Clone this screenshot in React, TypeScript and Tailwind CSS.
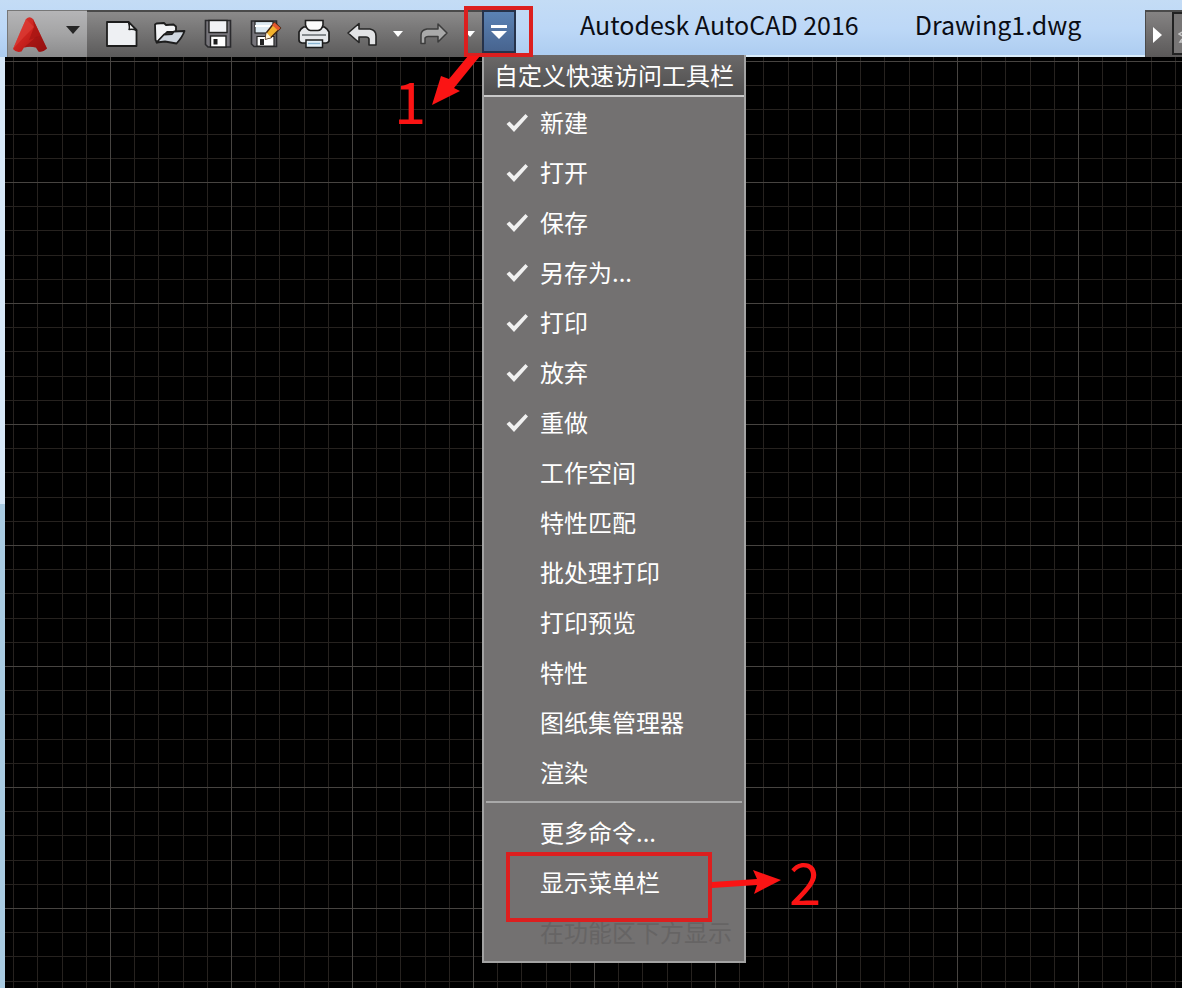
import { useState } from "react";
import type { ReactNode } from "react";

type MenuEntry = {
  label: string;
  checked?: boolean;
};

const toggles: MenuEntry[] = [
  { label: "新建", checked: true },
  { label: "打开", checked: true },
  { label: "保存", checked: true },
  { label: "另存为...", checked: true },
  { label: "打印", checked: true },
  { label: "放弃", checked: true },
  { label: "重做", checked: true },
  { label: "工作空间" },
  { label: "特性匹配" },
  { label: "批处理打印" },
  { label: "打印预览" },
  { label: "特性" },
  { label: "图纸集管理器" },
  { label: "渲染" },
];

// --- ICONS ---

function LogoIcon() {
  return (
    <svg width="36" height="38" viewBox="0 0 36 38">
      <defs>
        <linearGradient id="logoRed" x1="0" y1="0" x2="1" y2="1">
          <stop offset="0" stopColor="#dc3a33" />
          <stop offset="0.5" stopColor="#c9211d" />
          <stop offset="1" stopColor="#9a1010" />
        </linearGradient>
      </defs>
      <path
        d="M14 4Q17.500 0.500 21 4L35 33.500Q31 37.500 26.500 36.500L24 32.500Q18 31 12 32.500L9.500 36.500Q4 38 1 34Z"
        fill="url(#logoRed)"
      />
      <path d="M14 4L22 12L12 22L1 34L8.500 16Z" fill="#e04038" opacity="0.6" />
      <path d="M21 4L29 21L17 25L22 12Z" fill="#a81513" opacity="0.8" />
      <path d="M24 22L29 21L35 33.500Q31 37.500 26.500 36.500L24 32.500Q18 31 12 32.500Z" fill="#8d0d0d" opacity="0.5" />
    </svg>
  );
}

function NewIcon() {
  return (
    <svg width="34" height="28" viewBox="0 0 34 28">
      <path d="M2 2H23.500L31.500 10V26H2Z" fill="#eef0f3" stroke="#1d1d1d" strokeWidth="1.800" strokeLinejoin="round" />
      <path d="M23.500 2Q25 8 24 9.500Q28 8.500 31.500 10.500Z" fill="#fff" stroke="#1d1d1d" strokeWidth="1.500" strokeLinejoin="round" />
    </svg>
  );
}

function OpenIcon() {
  return (
    <svg width="34" height="26" viewBox="0 0 34 26">
      <path
        d="M2 3.500L3.500 2.500L11 2L13 4L20.500 3.500L23 5.500V11H14L4 21.500L2.500 19Z"
        fill="#f3f4f6"
        stroke="#1d1d1d"
        strokeWidth="1.800"
        strokeLinejoin="round"
      />
      <path
        d="M3.500 21.500L11 13.500L19 13L21 10.500L31.500 10Q29.500 16 23.500 22.500L12 20.500Z"
        fill="#cfd6df"
        stroke="#1d1d1d"
        strokeWidth="1.800"
        strokeLinejoin="round"
      />
    </svg>
  );
}

function SaveIcon() {
  return (
    <svg width="28" height="30" viewBox="0 0 28 30">
      <path d="M1.500 1.500H26.500V28H4L1.500 25.500Z" fill="#77757b" stroke="#2a2a2d" strokeWidth="1.600" />
      <rect x="5" y="1.500" width="18" height="12" fill="#f1f2f5" stroke="#222" strokeWidth="1.400" />
      <rect x="6.500" y="17" width="15.500" height="11" fill="#fff" stroke="#222" strokeWidth="1.400" />
      <rect x="9.500" y="20" width="4" height="5.500" fill="#1d1d1d" />
    </svg>
  );
}

function SaveAsIcon() {
  return (
    <svg width="32" height="30" viewBox="0 0 32 30">
      <path d="M1.500 2H26.500V27.500H4L1.500 25Z" fill="#77757b" stroke="#2a2a2d" strokeWidth="1.600" />
      <rect x="5" y="2.500" width="18" height="11.500" fill="#dce9f2" stroke="#222" strokeWidth="1.200" />
      <path d="M5 7H20" stroke="#fff" strokeWidth="2" />
      <path d="M7 17.500H24V27H7Z" fill="#fff" stroke="#222" strokeWidth="1.200" />
      <path d="M10 20h4v6h-4z" fill="#222" />
      <path d="M24.500 3.500L30.500 9L21 18.500L15.500 20L16.500 13.500Z" fill="#f3b22c" stroke="#402412" strokeWidth="1.400" strokeLinejoin="round" />
      <path d="M24.500 3.500L30.500 9L28 11.500L22 6Z" fill="#e4572e" />
      <path d="M16.500 13.500L21 18.500L15.500 20Z" fill="#fff3d6" />
    </svg>
  );
}

function PrintIcon() {
  return (
    <svg width="34" height="30" viewBox="0 0 34 30">
      <path d="M4 10L6.500 8H27.500L30 10L32 13V22Q31 24 29 24H5Q2 23.500 2 21V13Z" fill="#e6e8eb" stroke="#1d1d1d" strokeWidth="1.700" />
      <path d="M8.500 1.500H26V6Q24.500 11.500 21 11.500H13.500Q10 11 8.500 6Z" fill="#fafafa" stroke="#1d1d1d" strokeWidth="1.600" />
      <path d="M5 16H29" stroke="#6c7176" strokeWidth="1.600" />
      <path d="M9 21H25.500V28.500H9Z" fill="#e4f0f8" stroke="#1d1d1d" strokeWidth="1.500" />
      <path d="M11 24.500H23" stroke="#8ab4d0" strokeWidth="1.400" />
    </svg>
  );
}

function UndoIcon() {
  return (
    <svg width="32" height="26" viewBox="0 0 32 26">
      <path
        d="M2 12L13 2.500V8H24Q30 9 30 15V24H23V18Q22.500 16 20 16H13V21.500Z"
        fill="#e2e3e5"
        stroke="#242424"
        strokeWidth="1.600"
        strokeLinejoin="round"
      />
    </svg>
  );
}

function RedoIcon() {
  return (
    <svg width="30" height="24" viewBox="0 0 30 24">
      <path
        d="M28 11L19 2V7H8Q2 8 2 13V21.500H6V16Q7 14.500 9 14.500H19V20Z"
        fill="#a9a9a9"
        stroke="#3c3c3c"
        strokeWidth="1.500"
        strokeLinejoin="round"
      />
    </svg>
  );
}

function SmallCaret() {
  return (
    <svg width="10" height="6" viewBox="0 0 10 6">
      <path d="M0 0H10L5 6Z" fill="#fff" />
    </svg>
  );
}

function CheckIcon() {
  return (
    <svg width="24" height="24" viewBox="0 0 24 24">
      <path d="M0.500 14L3.500 11.500L8 16L19.500 4L22 6.500L8 22Z" fill="#f1f1f1" />
    </svg>
  );
}

// --- TOOLBAR ---

function ToolButton({ label, children }: { label: string; children: ReactNode }) {
  return (
    <button type="button" aria-label={label} className="flex w-12 items-center justify-center">
      {children}
    </button>
  );
}

function CaretButton({ label }: { label: string }) {
  return (
    <button type="button" aria-label={label} className="flex w-6 items-center justify-center">
      <SmallCaret />
    </button>
  );
}

function DrawingGrid() {
  return (
    <svg className="h-full w-full" aria-hidden="true">
      <defs>
        <pattern id="grid" x="105" y="4" width="121" height="121" patternUnits="userSpaceOnUse">
          <path d="M24 0h1v121h-1zM48 0h1v121h-1zM73 0h1v121h-1zM97 0h1v121h-1z" fill="#26221f" />
          <path d="M0 24h121v1H0zM0 48h121v1H0zM0 73h121v1H0zM0 97h121v1H0z" fill="#26221f" />
          <path d="M0 0h121v1H0zM0 0h1v121H0z" fill="#474441" />
        </pattern>
      </defs>
      <rect width="100%" height="100%" fill="url(#grid)" />
    </svg>
  );
}

function MenuItem({ label, checked, onClick }: MenuEntry & { onClick?: () => void }) {
  return (
    <li>
      <button
        type="button"
        role="menuitemcheckbox"
        aria-checked={!!checked}
        onClick={onClick}
        className="flex h-[50px] w-full items-center text-left"
      >
        <span className="flex w-14 justify-center pl-3">{checked && <CheckIcon />}</span>
        {label}
      </button>
    </li>
  );
}

function QuickAccessMenu() {
  const [entries, setEntries] = useState(toggles);

  const toggle = (label: string) =>
    setEntries((list) =>
      list.map((e) => (e.label === label ? { ...e, checked: !e.checked } : e))
    );

  return (
    <div className="absolute top-[45px] left-0 z-10 w-[264px] border-2 border-t-0 border-[#a3a3a3] bg-[#737171] text-2xl text-white">
      <h2 className="flex h-[42px] items-center justify-center border-b-2 border-[#c9c9c9] bg-linear-to-b from-[#6b6969] to-[#4f4e4e] font-normal whitespace-nowrap">
        自定义快速访问工具栏
      </h2>
      <ul>
        {entries.map((e) => (
          <MenuItem key={e.label} {...e} onClick={() => toggle(e.label)} />
        ))}
      </ul>
      <hr className="mx-0.5 mt-1 mb-1 border-t-2 border-[#a9a9a9]" />
      <ul className="pb-1">
        <MenuItem label="更多命令..." />
        <MenuItem label="显示菜单栏" />
        <li>
          <button type="button" disabled className="flex h-[50px] w-full items-center pl-14 text-[#666464]">
            在功能区下方显示
          </button>
        </li>
      </ul>
    </div>
  );
}

// Red step marks, drawn from the corner of the drop-down button
function StepMarks() {
  return (
    <div className="pointer-events-none absolute top-0 left-0 z-20 text-[58px] leading-none text-[#fb1414]">
      <svg width="320" height="930" className="overflow-visible">
        <g fill="none" stroke="#dc1f1f" strokeWidth="4">
          <rect x="-16" y="-2" width="65" height="47" />
          <rect x="26" y="844" width="202" height="66" />
        </g>
        <g fill="#fb1414">
          <path d="M-14 46L-2 46L-28 78L-22 81L-50 95L-41 66L-33 69Z" />
          <path d="M230 872L275 869L271 860L299 870L272 884L275 875L230 878Z" />
        </g>
      </svg>
      <span className="absolute top-[60px] -left-[88px]">1</span>
      <span className="absolute top-[841px] left-[307px]">2</span>
    </div>
  );
}

export default function App() {
  const [open, setOpen] = useState(true);

  return (
    <div className="flex min-h-screen flex-col overflow-hidden bg-black font-['Noto_Sans_CJK_SC',sans-serif]">
      <header className="flex h-[57px] items-stretch bg-linear-to-b from-[#c4dcf5] via-[#bdd8f7] to-[#acccf0] pt-2.5 pl-[7px]">
        <button
          type="button"
          aria-label="应用程序菜单"
          className="flex w-20 items-center gap-[18px] border-t border-l border-[#777] bg-linear-to-b from-[#b5b5b7] via-[#a4a4a5] to-[#8b8b8c] pl-1"
        >
          <LogoIcon />
          <svg width="14" height="9" viewBox="0 0 14 9" className="mb-2">
            <path d="M0 0H14L7 8Z" fill="#262626" />
          </svg>
        </button>
        <div className="flex border-t-2 border-[#4a4a4a] bg-linear-to-b from-[#8b8a8a] to-[#5b5a5a] pb-0.5 pl-[11px]">
          <ToolButton label="新建"><NewIcon /></ToolButton>
          <ToolButton label="打开"><OpenIcon /></ToolButton>
          <ToolButton label="保存"><SaveIcon /></ToolButton>
          <ToolButton label="另存为"><SaveAsIcon /></ToolButton>
          <ToolButton label="打印"><PrintIcon /></ToolButton>
          <ToolButton label="放弃"><UndoIcon /></ToolButton>
          <CaretButton label="放弃列表" />
          <ToolButton label="重做"><RedoIcon /></ToolButton>
          <CaretButton label="重做列表" />
        </div>
        <div className="relative">
          <button
            type="button"
            aria-label="自定义快速访问工具栏"
            aria-expanded={open}
            onClick={() => setOpen(!open)}
            className="flex h-[43px] w-[34px] items-center justify-center border-2 border-[#26324a] bg-linear-to-b from-[#5b82b4] to-[#47648f]"
          >
            <svg width="18" height="16" viewBox="0 0 18 16">
              <path d="M1 1H17V4H1ZM1 7H17L9 15Z" fill="#fff" />
            </svg>
          </button>
          {open && <QuickAccessMenu />}
          <StepMarks />
        </div>
        <div className="-mt-2.5 flex flex-1 items-center gap-14 border-b-2 border-[#d9ecfb] pb-1.5 pl-16 text-[25px] whitespace-nowrap text-[#0b0d14]">
          <span>Autodesk AutoCAD 2016</span>
          <span>Drawing1.dwg</span>
        </div>
        <div className="flex w-[37px] border-t-2 border-l border-[#4a4a4a] bg-linear-to-b from-[#858383] to-[#5b5959]">
          <button type="button" aria-label="展开" className="flex w-6 items-center justify-center">
            <svg width="9" height="16" viewBox="0 0 9 16">
              <path d="M0 0L9 8L0 16Z" fill="#fff" />
            </svg>
          </button>
          <div className="mb-0.5 ml-1 flex flex-1 items-center border-2 border-r-0 border-[#222] bg-[#777575] pl-1">
            <svg width="4" height="20" viewBox="0 0 4 20">
              <path d="M4 8L1 10L4 12M4 15L2 18H4" fill="none" stroke="#c8c8c8" strokeWidth="1.500" />
            </svg>
          </div>
        </div>
      </header>
      <main className="flex flex-1">
        <div className="w-[5px] bg-linear-to-b from-[#d7e8f8] from-48% to-[#a9cbe2] to-48%" />
        <div className="relative flex-1 bg-black">
          <div className="absolute inset-0">
            <DrawingGrid />
          </div>
        </div>
      </main>
    </div>
  );
}
